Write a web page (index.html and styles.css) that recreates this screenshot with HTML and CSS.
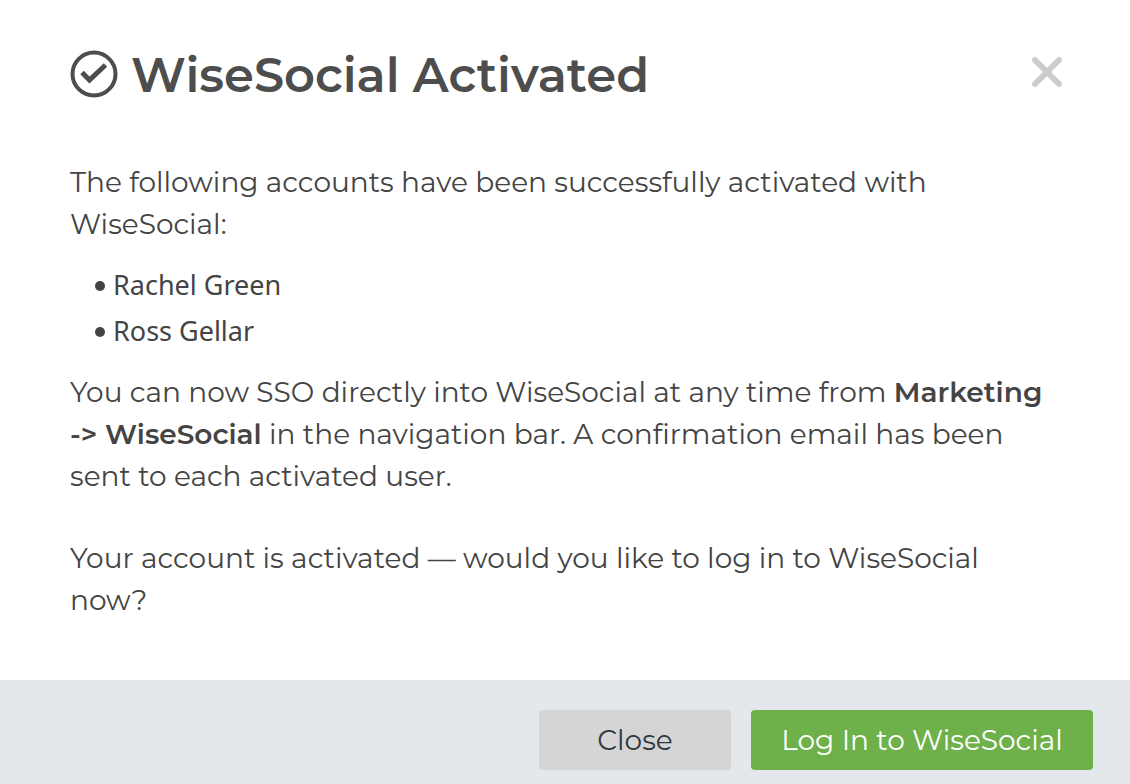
FILE: index.html
```html
<!DOCTYPE html>
<html lang="en">
<head>
<meta charset="utf-8">
<title>WiseSocial Activated</title>
<link rel="stylesheet" href="styles.css">
</head>
<body>
<main class="dialog" role="dialog" aria-labelledby="title">
  <header class="header">
    <svg class="check" viewBox="0 0 48 48" aria-hidden="true"><circle cx="24" cy="24" r="21.5"/><path class="tick" d="M12 22.500l7.500 7.500 16-15"/></svg>
    <h1 class="title" id="title">WiseSocial Activated</h1>
    <button class="dismiss" type="button" aria-label="Dismiss"><svg viewBox="0 0 32 32" aria-hidden="true"><path d="M4 4l24 24M28 4L4 28"/></svg></button>
  </header>
  <section class="content">
    <p>The following accounts have been successfully activated with WiseSocial:</p>
    <ul class="accounts"><li>Rachel Green</li><li>Ross Gellar</li></ul>
    <p>You can now SSO directly into WiseSocial at any time from <strong>Marketing -&gt; WiseSocial</strong> in the navigation bar. A confirmation email has been sent to each activated user.</p>
    <p class="question">Your account is activated — would you like to log in to WiseSocial now?</p>
  </section>
  <footer class="footer">
    <button class="button" type="button">Close</button>
    <button class="button primary" type="button">Log In to WiseSocial</button>
  </footer>
</main>
</body>
</html>
```
FILE: styles.css
```css
* { box-sizing: border-box; }
body { margin: 0; background: #fff; color: #444; font-family: Montserrat, "Open Sans", sans-serif; }
.dialog { display: flex; flex-direction: column; min-height: 100vh; }
.header { display: flex; align-items: center; padding: 40px 67px 0 70px; }
.check { width: 48px; height: 48px; margin-right: 13px; fill: none; stroke: #4d4d4d; stroke-width: 4; }
.tick { stroke-width: 5; }
.title { margin: 0; padding-top: 2px; font-size: 48px; line-height: 66px; font-weight: 600; color: #4d4d4d; }
.dismiss { margin: 0 0 4px auto; padding: 0; border: 0; background: none; width: 32px; height: 32px; }
.dismiss svg { display: block; fill: none; stroke: #ccc; stroke-width: 6; stroke-linecap: round; }
.content { padding: 53px 74px 59px 70px; font-size: 28px; line-height: 42px; }
.content p { margin: 0; }
.content strong { font-weight: 600; }
.accounts { list-style: none; margin: 17px 0; padding: 0 0 0 25px; font-family: "Noto Sans", sans-serif; font-size: 27px; line-height: 46px; }
.accounts li { display: flex; align-items: center; gap: 8px; }
.accounts li::before { content: ""; width: 10px; height: 10px; margin-top: 2px; border-radius: 50%; background: #444; }
.content .question { margin-top: 40px; }
.footer { display: flex; justify-content: flex-end; gap: 20px; margin-top: auto; padding: 30px 37px 14px; background: #e4e8ec; }
.button { min-width: 192px; height: 60px; padding: 0 30px; border: 0; border-radius: 4px; background: #d5d5d5; color: #303841; font: 28px Montserrat, "Open Sans", sans-serif; }
.primary { min-width: 342px; background: #6eb04a; color: #fff; }
```
